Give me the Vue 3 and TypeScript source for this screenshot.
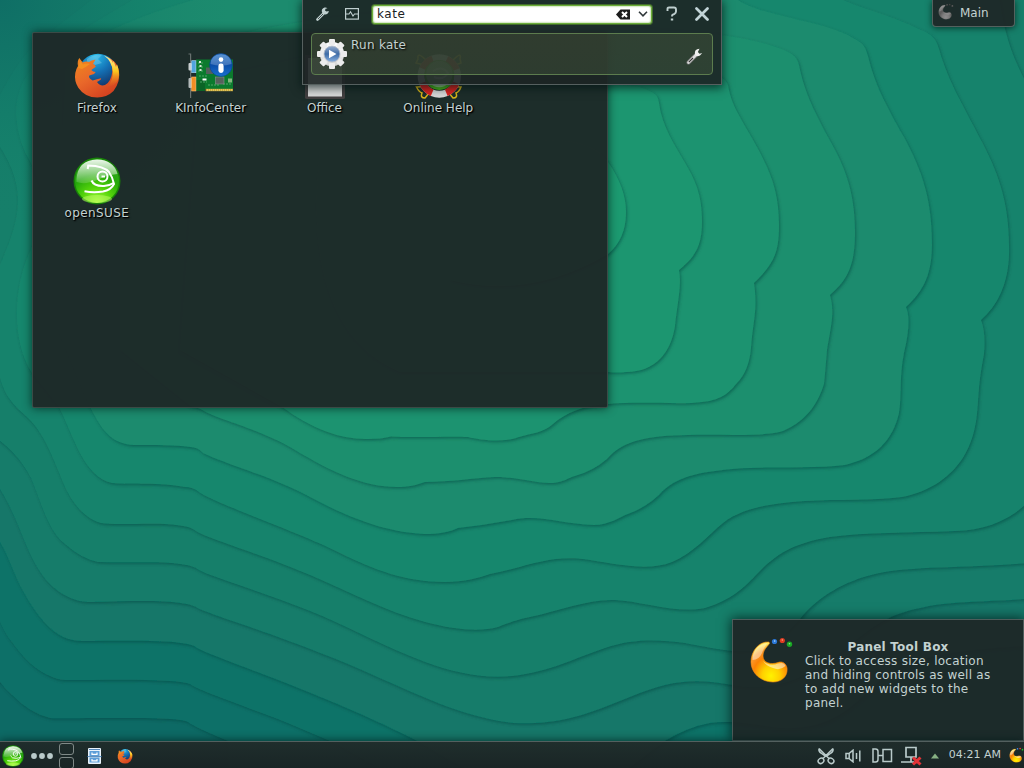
<script setup lang="ts">
interface Launcher {
  label: string
  icon: string
  wide?: boolean
}

const launchers: Launcher[] = [
  { label: 'Firefox', icon: 'i-firefox' },
  { label: 'KInfoCenter', icon: 'i-kinfo' },
  { label: 'Office', icon: 'i-office' },
  { label: 'Online Help', icon: 'i-help' },
  { label: 'openSUSE', icon: 'i-suse', wide: true },
]

// Terraces of the wallpaper, outermost first.
const terraces: { fill: string; d: string }[] = [
  { fill: '#0f6f67', d: 'M0 682 Q5 689 12 695 Q31 714 50 718 C54 719 130 717 170 719 Q184 720 188 722 Q194 727 228 741 L228 780 L1040 780 L1040 -10 L-10 -10 V682Z' },
  { fill: '#107368', d: 'M-5 610 Q5 635 12 642 Q30 668 50 676 Q58 680 66 680 C100 680 140 679 170 681 Q184 682 190 684 C197 690 240 704 290 724 L330 741 L420 790 L1040 790 L1040 -10 L-10 -10 V610Z' },
  { fill: '#127769', d: 'M-5 535 C8 552 12 572 24 593 C36 615 50 631 63 637 Q72 641 82 641 C120 641 160 640 180 643 Q189 644 194 646 C200 652 250 668 320 697 C350 709 390 727 417 741 L500 790 L600 790 L665 741 Q688 727 710 723 C730 720 750 724 780 728 C830 730 850 710 880 680 C910 655 960 650 1040 645 L1040 -10 L-10 -10 V535Z' },
  { fill: '#137b6a', d: 'M-5 482 C7 498 16 520 24 540 C38 575 52 592 76 600 Q82 602 92 602 C130 601 160 600 180 603 Q190 604 196 607 C202 612 260 629 320 653 C360 668 400 688 440 704 C480 719 510 725 535 723 C570 722 600 709 630 697 C670 680 695 678 732 685 C780 695 820 670 850 645 C880 620 895 613 925 607 C950 601 990 602 1040 598 L1040 -10 L-10 -10 V482Z' },
  { fill: '#157f6b', d: 'M-5 437 C12 449 24 464 31 478 C42 504 48 531 65 544 Q82 559 98 562 C130 563 160 561 180 564 Q190 565 196 568 C204 575 250 587 310 611 C345 625 385 647 425 662 C455 673 485 679 512 676 C550 672 575 658 605 648 C635 638 660 640 685 643 C710 648 723 650 732 651 C768 653 780 640 800 619 C817 597 845 581 875 574 C915 565 970 569 1040 562 L1040 -10 L-10 -10 V437Z' },
  { fill: '#17836c', d: 'M-5 350 C0 395 11 402 28 418 C45 434 54 461 65 487 C75 508 87 519 101 523 C120 526 160 521 183 526 Q191 527 196 531 C206 538 255 552 310 575 C350 592 385 611 425 622 C455 630 480 632 498 627 C508 623 516 620 530 617 C562 610 588 599 615 600 C641 601 675 614 705 608 C730 601 745 587 758 573 C775 555 793 543 830 537 C865 532 910 533 955 531 C985 530 1010 521 1030 500 L1030 90 C1015 62 1009 47 1003 20 L998 -10 L105 -10 Q45 35 30 50 T-5 105 V140 C12 162 18 184 18 200 C18 224 8 246 0 265 L-5 275Z' },
  { fill: '#18876d', d: 'M59 407 C76 442 84 476 112 483 C130 485 160 482 185 487 Q193 487 199 492 C212 502 300 533 340 553 C375 570 405 582 445 582 C465 582 478 578 490 574 Q500 572 512 569 C540 561 563 555 590 560 C620 565 650 571 672 562 C694 553 708 535 723 523 C743 507 775 503 805 501 C840 499 870 501 902 497 C930 492 952 476 964 456 C978 432 977 411 979 388 Q980 375 984 354 Q986 333 981 320 C997 306 1008 285 1009 255 C1010 210 1002 180 982 142 C962 103 948 81 939 49 C936 39 933 35 921 30 C889 14 860 9 832 -5 L150 -10 Q75 33 45 55 Q15 81 16 115 Q18 143 31 163 C48 198 45 220 31 249 C12 290 12 342 32 373 Z' },
  { fill: '#1a8b6e', d: 'M90 407 C103 433 113 444 134 445 C154 445 175 445 190 447 Q198 447 203 453 C220 462 275 478 310 497 C351 519 386 532 424 534 C440 534 449 532 458 528 Q485 525 512 520 C540 514 560 524 594 525 C609 525 620 517 628 514 Q645 508 659 495 C676 476 700 472 733 469 C770 466 815 469 845 465 C876 458 893 440 899 413 C902 396 899 379 904 353 Q912 320 906 307 C926 289 932 271 932 243 C932 201 923 172 904 137 C886 105 875 85 868 56 C865 43 860 42 848 35 C810 18 760 16 735 -2 L230 -10 Q80 28 65 70 L58 330Z' },
  { fill: '#1b8f6e', d: 'M190 406 Q198 407 204 411 C220 420 265 431 295 450 C330 471 363 487 397 487 C408 487 417 485 425 482 C450 482 473 478 495 477 C518 477 537 484 553 483 C564 482 568 478 575 476 Q593 471 607 459 C624 439 650 436 688 435 C720 434 765 437 783 431 C809 420 819 400 824 384 Q825 375 827 350 C831 325 835 313 830 295 C847 280 855 267 855 232 C855 190 844 165 828 137 C812 107 804 90 799 65 C797 55 790 52 776 47 Q752 39 722 35 L410 10 Q150 30 120 100 L120 350Z' },
  { fill: '#1c936f', d: 'M282 407 Q327 440 368 439 Q382 439 391 436.500 C415 438 450 436 468 437 C480 440 503 443 519 437 C532 433 543 433 553 424 C565 413 585 405 608 404 C643 401 682 405 702 402 C724 400 731 390 737 383 Q749 371 751 348 C753 320 758 310 754 283 C775 263 779 251 779 225 C779 190 770 170 752 138 C737 112 731 103 728 85 C725 76 715 75 690 65 L430 30 L200 80 L180 350Z' },
  { fill: '#1d966f', d: 'M320 150 L560 80 L640 87 C656 93 658 95 659 103 C662 127 675 145 688 168 C699 187 702 202 702 222 C702 246 695 257 679 270 C682 285 677 305 675 326 C671 352 656 372 626 372 Q617 373 608 372 L400 372 Q300 330 320 150Z' },
  { fill: '#1e9a70', d: 'M450 160 Q580 120 608 162 Q626 188 626 212 Q626 239 608 254 Q530 300 450 280Z' },
]
</script>

<template>
  <div class="desktop">
    <svg class="defs" width="0" height="0" aria-hidden="true">
      <defs>
        <linearGradient id="g-fox" x1="0" y1="0" x2=".7" y2="1">
          <stop offset="0" stop-color="#f08a1d" /><stop offset=".5" stop-color="#e9682a" /><stop offset="1" stop-color="#d2401f" />
        </linearGradient>
        <linearGradient id="g-tail" x1="0" y1="0" x2="0" y2="1">
          <stop offset="0" stop-color="#fff3a0" /><stop offset=".5" stop-color="#fbc81e" /><stop offset="1" stop-color="#ee7a1d" stop-opacity="0" />
        </linearGradient>
        <radialGradient id="g-globe" cx=".42" cy=".05" r=".85">
          <stop offset="0" stop-color="#28c0ee" /><stop offset=".5" stop-color="#1470b4" /><stop offset="1" stop-color="#122f62" />
        </radialGradient>
        <radialGradient id="g-suse" cx=".5" cy="1" r="1">
          <stop offset="0" stop-color="#a6ff3c" /><stop offset=".35" stop-color="#55d40b" /><stop offset=".65" stop-color="#25a80b" /><stop offset="1" stop-color="#39a82a" />
        </radialGradient>
        <linearGradient id="g-shine" x1="0" y1="0" x2="0" y2="1">
          <stop offset="0" stop-color="#fff" stop-opacity=".9" /><stop offset="1" stop-color="#fff" stop-opacity=".15" />
        </linearGradient>
        <linearGradient id="g-info" x1="0" y1="0" x2="0" y2="1">
          <stop offset="0" stop-color="#2c76c8" /><stop offset=".5" stop-color="#0b4ea8" /><stop offset="1" stop-color="#1a70cf" />
        </linearGradient>
        <linearGradient id="g-gear" x1="0" y1="0" x2="0" y2="1">
          <stop offset="0" stop-color="#fff" /><stop offset="1" stop-color="#d4d4d4" />
        </linearGradient>
        <linearGradient id="g-play" x1="0" y1="0" x2="0" y2="1">
          <stop offset="0" stop-color="#93abcb" /><stop offset=".5" stop-color="#3e6ba6" /><stop offset="1" stop-color="#86afe0" />
        </linearGradient>
        <radialGradient id="g-cashew" cx=".55" cy=".85" r=".8">
          <stop offset="0" stop-color="#fff200" /><stop offset=".3" stop-color="#ffd000" /><stop offset=".62" stop-color="#fb8206" /><stop offset=".82" stop-color="#fb9a2e" /><stop offset="1" stop-color="#ffe75a" />
        </radialGradient>
        <linearGradient id="g-cshine" x1="0" y1="0" x2="0" y2="1">
          <stop offset="0" stop-color="#fff" stop-opacity=".35" /><stop offset="1" stop-color="#fff" stop-opacity=".5" />
        </linearGradient>
      </defs>

      <symbol id="i-firefox" viewBox="0 0 48 48">
        <circle cx="25" cy="22.500" r="19.700" fill="url(#g-globe)" />
        <path fill="#9fd8ef" opacity=".35" d="M14 8 Q21 3 29 4 L25 8 L29 12 L22 14 L14 11Z" />
        <path fill="url(#g-fox)" d="M6.300 7 L9.700 11.500 Q13 10 16 11 Q18 9 22.500 8.500 L20 13 Q22 13 22.800 15.700 L18.300 19 Q20 21 22.700 21 L21 23 L16.300 24.500 Q15 27 19.700 29.500 Q24 28 28 27.300 Q29 28.500 24 31 Q27 35.500 32 34 Q38 31 39.300 20.700 Q40 12 34.300 6 Q44 10 45.800 19 Q48 30 40.500 40 Q34 46.500 24.300 46.500 Q12 46.500 5.300 36.700 Q1 30 2.300 22 Q3 18 5 15 Q4 10 6.300 7Z" />
        <path fill="url(#g-tail)" d="M31 4.500 Q38 7 40 12 L40.500 10 L43 16 L44 13.500 Q47 21 45.500 28 Q43 35 34 36 Q40 30 39.800 21 Q39 10 31 4.500Z" />
        <path fill="#f9a21f" opacity=".55" d="M5 17 L7 10 L10 13.500 Q14 12 17 13 Q13 16 9 18Z" />
      </symbol>

      <symbol id="i-suse" viewBox="0 0 48 48">
        <circle cx="24" cy="24" r="23.500" fill="#188408" />
        <circle cx="24" cy="24" r="22" fill="url(#g-suse)" />
        <path fill="url(#g-shine)" d="M3.500 22 Q5 3 24 2.500 Q41 3 44.500 17 Q34 18 24 23 Q12 28 3.500 25Z" />
        <ellipse cx="24" cy="42" rx="15" ry="4" fill="#c9ff70" opacity=".45" />
        <g fill="none" stroke="#fff" stroke-width="2">
          <path d="M14.700 12 L15.200 8.500 Q31 9 36 15 Q39.500 20 41 27 Q38 33 30 34.500 Q20 36 11.500 34.200" />
          <path d="M18.500 23.500 Q21 29.500 31 29 Q37 28.500 40.500 26" />
          <circle cx="29.500" cy="19.500" r="5" /><path d="M28.500 19.500 h3.500" />
        </g>
      </symbol>

      <symbol id="i-kinfo" viewBox="0 0 48 48">
        <rect x="9" y="8.500" width="37" height="29.500" fill="#0b7a2d" />
        <path d="M9 29 H18 V40 H9Z" fill="#0b6426" />
        <rect x="18.700" y="37.800" width="27.300" height="2.400" fill="#c9a83c" />
        <path d="M20 39h26" stroke="#eee084" stroke-dasharray="1 1" />
        <path d="M11 12h6M11 16h6M11 20h5M12 25h8M13 31h7M21 34h12M36 33h8" stroke="#51a866" stroke-dasharray="2 1" />
        <rect x="12" y="10" width="2" height="2" fill="#d5e5d5" /><rect x="12.500" y="14" width="2" height="2" fill="#d5e5d5" /><rect x="12.500" y="18" width="2" height="2" fill="#d5e5d5" />
        <rect x="19" y="16.500" width="7" height="6.500" fill="#52605a" /><rect x="28.500" y="26" width="8.500" height="7" fill="#56625d" stroke="#87938c" stroke-width=".6" />
        <path d="M15.500 28.500h4" stroke="#fff" stroke-width="2" /><rect x="41" y="27.500" width="4" height="4" fill="#82b67f" />
        <path d="M1.500 3 H3.600 V47" fill="none" stroke="#68716f" stroke-width="1.200" />
        <rect x="1.500" y="12" width="3.500" height="7.500" rx="1" fill="#c9cfd0" /><rect x="1.500" y="27" width="3.500" height="10" rx="1" fill="#b4baba" />
        <rect x="4.700" y="9.700" width="4.200" height="12" fill="#50a4dd" stroke="#b2dbf3" stroke-width=".6" />
        <rect x="4.700" y="26" width="4.200" height="14" fill="#f18d24" stroke="#ffc478" stroke-width=".6" />
        <circle cx="34" cy="14" r="11.400" fill="url(#g-info)" stroke="#073f8c" stroke-width=".5" />
        <path d="M23.500 13 Q24 3.500 34 3.200 Q44 3.500 44.500 13 Q34 16 23.500 13Z" fill="#fff" opacity=".22" />
        <circle cx="34" cy="8.600" r="2.300" fill="#fff" /><rect x="31.400" y="12.500" width="5.200" height="9.500" rx="2.400" fill="#fff" />
      </symbol>

      <symbol id="i-office" viewBox="0 0 48 48">
        <path d="M5 4 H45 V46.500 Q45 48 43 48 H7 Q5 48 5 46.500Z" fill="#423f40" />
        <path d="M8 7 H42 V45.500 H8Z" fill="#d9d9d9" />
      </symbol>

      <symbol id="i-help" viewBox="0 0 48 48">
        <g fill="none" stroke="#d9b51a" stroke-width="1.500">
          <path d="M12 9 Q3 0 4 8 L2 12 L6 13 L9 14M39 9 Q48 0 46 8 L47 12 L44 13 L40 14M10 35 Q7 36 2.500 36 Q5 41 8 42 Q6 47 11 47 L15 42M40 35 Q43 36 47 36 Q45 41 42 42 Q44 47 39 47 L35 42" />
        </g>
        <circle cx="25.300" cy="25" r="18.200" fill="none" stroke="#d8d8d8" stroke-width="7" />
        <circle cx="25.300" cy="25" r="18.200" fill="none" stroke="#dc2220" stroke-width="7" stroke-dasharray="14.200 14.388" stroke-dashoffset="-7.100" />
        <circle cx="25.300" cy="24" r="15" fill="#4cb91c" />
        <circle cx="25.300" cy="23" r="13.200" fill="#9ad28a" />
        <path d="M19 20 Q28 14 34 22 Q29 30 20 26" fill="none" stroke="#dff5d5" stroke-width="2" />
      </symbol>

      <symbol id="i-cashew" viewBox="0 0 48 48">
        <path fill="url(#g-cashew)" stroke="#f98d12" stroke-width=".6" d="M20 6 C10 5 2 15 2 26 C2 37 12 46 24 46 C33 46 39 40 38 32 C37 27 33 25 29 26.500 C22 29 14 27 14 20 C14 14 18 11 20.500 7.500 Z" />
        <path fill="url(#g-cshine)" d="M18.500 7 C9 8 3.500 15 3.500 24 Q10 24 13 17 Q15 11 18.500 7ZM14 25 Q21 31 29 27.500 Q35 25.500 36.500 30 Q31 35 24 32 Q17 30 14 25Z" />
        <circle cx="25.500" cy="5.500" r="2.600" fill="#2b78d8" /><circle cx="33.300" cy="4.500" r="2.600" fill="#dd3b20" /><circle cx="40.500" cy="8.300" r="2.700" fill="#19a825" />
        <circle cx="25.700" cy="5" r=".8" fill="#b1dcff" /><circle cx="33.300" cy="4" r=".8" fill="#ffa28e" /><circle cx="40.500" cy="7.700" r=".8" fill="#8df08d" />
      </symbol>
    </svg>

    <svg class="wallpaper" width="1024" height="768" viewBox="0 0 1024 768">
      <defs>
        <filter id="edge" filterUnits="userSpaceOnUse" x="0" y="0" width="1024" height="768">
          <feDropShadow dx="1.200" dy="1.600" stdDeviation="1.600" flood-color="#063f3c" flood-opacity=".5" />
        </filter>
        <radialGradient id="corner" gradientUnits="userSpaceOnUse" cx="0" cy="0" r="230">
          <stop offset="0" stop-color="#0d6a64" stop-opacity=".8" /><stop offset=".35" stop-color="#0f7066" stop-opacity=".5" /><stop offset="1" stop-color="#17806a" stop-opacity="0" />
        </radialGradient>
      </defs>
      <rect width="1024" height="768" fill="#0d6a65" />
      <path v-for="t in terraces" :key="t.fill" :d="t.d" :fill="t.fill" filter="url(#edge)" />
      <rect width="300" height="260" fill="url(#corner)" />
    </svg>

    <section class="folder">
      <div v-for="l in launchers" :key="l.label" class="launcher" :class="{ wide: l.wide }">
        <svg class="launcher-icon" width="48" height="48"><use :href="'#' + l.icon" /></svg>
        <span>{{ l.label }}</span>
      </div>
    </section>

    <section class="runner">
      <div class="runner-bar">
        <svg width="14" height="14" viewBox="0 0 14 14"><path d="M1.500 12.500 L8 6" stroke="#bfcfcf" stroke-width="2.600" stroke-linecap="round" /><path d="M11.500 1.200 A3.500 3.500 0 1 0 12.800 4 L10.500 4.600 L9 3.600 L9.500 1.800Z" fill="#bfcfcf" /><path d="M2 12 L7 7" stroke="#263634" stroke-width=".8" /></svg>
        <svg class="monitor" width="14" height="12" viewBox="0 0 14 12"><rect x=".6" y=".6" width="12.800" height="10.500" fill="none" stroke="#bfcfcf" stroke-width="1.200" /><path d="M1 6 H4 L5.500 3.800 L8 8 L9.500 6 H13" fill="none" stroke="#bfcfcf" stroke-width="1.100" /></svg>
        <div class="field">
          <span class="typed">kate</span>
          <svg width="14" height="11" viewBox="0 0 14 11"><path d="M0 5.500 L4.500 .5 H14 V10.500 H4.500Z" fill="#1c1c1c" /><path d="M6 3 L11 8M11 3 L6 8" stroke="#fff" stroke-width="2" /></svg>
          <svg class="chev" width="10" height="6" viewBox="0 0 10 6"><path d="M1 .8 L5 4.800 L9 .8" fill="none" stroke="#30383a" stroke-width="1.600" /></svg>
        </div>
        <svg class="query" width="12" height="16" viewBox="0 0 12 16"><path d="M1.500 5 V2.800 Q1.500 1.500 3 1.500 H8 Q10 1.500 10 3.500 V5.500 Q10 7 8.500 7.800 L6.500 8.800 Q6 9.200 6 10.500" fill="none" stroke="#bfcfcf" stroke-width="1.900" /><rect x="4.800" y="12.500" width="2.400" height="2" fill="#bfcfcf" /></svg>
        <svg class="close" width="14" height="14" viewBox="0 0 14 14"><path d="M1.500 1.500 L12.500 12.500M12.500 1.500 L1.500 12.500" stroke="#c2d4d7" stroke-width="2.700" stroke-linecap="round" /></svg>
      </div>
      <div class="match">
        <svg width="32" height="32" viewBox="-16 -16 32 32">
          <g fill="url(#g-gear)"><circle r="12.200" /><rect v-for="a in 8" :key="a" x="-3" y="-15" width="6" height="6" rx="1" fill="#ececec" :transform="`rotate(${a * 45})`" /></g>
          <circle r="8" fill="url(#g-play)" stroke="#b5bdc8" stroke-width=".8" /><path d="M-3 -4.200 L4.500 0 L-3 4.200Z" fill="#fff" />
        </svg>
        <span class="match-label">Run kate</span>
        <svg class="wrench" width="17" height="17" viewBox="0 0 17 17"><path d="M2.500 14.500 L10 7" stroke="#777" stroke-width="4" stroke-linecap="round" /><path d="M2.500 14.500 L10 7" stroke="#ddd" stroke-width="2.600" stroke-linecap="round" /><path d="M2.800 14.200 L7 10" stroke="#333" stroke-width="1.100" /><path d="M13.500 .8 Q8 1 9 6.500 Q10.500 9.500 14 7.500 L16.200 5 L13.500 5.800 L11.900 4 Z" fill="#f0f0f0" /></svg>
      </div>
    </section>

    <div class="activity">
      <svg class="ghost" width="17" height="17"><use href="#i-cashew" /></svg>
      <span>Main</span>
    </div>

    <aside class="tooltip">
      <svg width="48" height="48"><use href="#i-cashew" /></svg>
      <div class="tip-text">
        <b>Panel Tool Box</b>
        <p>Click to access size, location<br>and hiding controls as well as<br>to add new widgets to the<br>panel.</p>
      </div>
    </aside>

    <footer class="taskbar">
      <svg class="start" width="22" height="22"><use href="#i-suse" /></svg>
      <svg class="dots" width="22" height="6" viewBox="0 0 22 6" fill="#b9caca"><circle cx="3" cy="3" r="2.900" /><circle cx="11" cy="3" r="2.900" /><circle cx="19" cy="3" r="2.900" /></svg>
      <div class="pager"><i /><i /></div>
      <svg class="cabinet" width="15" height="16" viewBox="0 0 15 16"><rect x="1" y="0" width="13" height="16" rx="1" fill="#e9f3fb" /><rect x="2.500" y="3" width="10" height="5" fill="#5d9ed8" /><rect x="2.500" y="9.500" width="10" height="5" fill="#5d9ed8" /><path d="M2 1.500h11M0 8.600h15" stroke="#2e6aa6" stroke-width=".8" /><path d="M5 4.500 V6.300 H10 V4.500M5 11 V12.800 H10 V11" fill="none" stroke="#fff" stroke-width="1.200" /></svg>
      <svg class="fox" width="16" height="16"><use href="#i-firefox" /></svg>
      <div class="tray">
        <svg width="18" height="18" viewBox="0 0 18 18" fill="none" stroke="#b9caca" stroke-width="1.500"><path d="M2 1.500 L12 11.500M16 1.500 L6 11.500M2 1.500 Q1.500 4.500 4 6 L8 9M16 1.500 Q16.500 4.500 14 6 L10 9" /><ellipse cx="4" cy="13.800" rx="3" ry="2.500" transform="rotate(-35 4 13.800)" /><ellipse cx="14" cy="13.800" rx="3" ry="2.500" transform="rotate(35 14 13.800)" /></svg>
        <svg class="vol" width="17" height="14" viewBox="0 0 17 14" fill="none" stroke="#b9caca" stroke-width="1.500"><path d="M1 4.500 H4 L8 1.200 V12.800 L4 9.500 H1ZM4.200 4.500 V9.500M11.500 4 V10M14.800 1.500 V12.500" /></svg>
        <svg class="plug" width="21" height="15" viewBox="0 0 21 15" fill="none" stroke="#b9caca" stroke-width="1.500"><path d="M1 1 H3.500 Q6 1 6 3.500 V11.500 Q6 14 3.500 14 H1ZM6 7.500 H11M11 1.500 H19.500 V13.500 H11Z" /></svg>
        <svg class="net" width="21" height="20" viewBox="0 0 21 20" fill="none"><path d="M5 1.500 H15 V11 H5ZM10 11 V16M0 16 H13" stroke="#b9caca" stroke-width="1.700" /><path d="M12 11.500 L19.500 18.500M19.500 11.500 L12 18.500" stroke="#e33438" stroke-width="3" /></svg>
        <svg class="up" width="8" height="6" viewBox="0 0 8 6"><path d="M0 5.500 L4 .5 L8 5.500Z" fill="#87b083" /></svg>
        <time>04:21 AM</time>
        <svg class="tray-cashew" width="16" height="16"><use href="#i-cashew" /></svg>
      </div>
    </footer>
  </div>
</template>

<style>
body { overflow: hidden; background: #15806b; }
</style>

<style scoped>
.desktop { position: relative; width: 1024px; height: 768px; overflow: hidden; font: 12px/14px "DejaVu Sans", sans-serif; color: #c3d2d1; }
.desktop svg { display: block; flex: none; }
.defs { position: absolute; }
.wallpaper { position: absolute; inset: 0; }

.folder {
  position: absolute; left: 32px; top: 32px; width: 576px; height: 376px; box-sizing: border-box;
  padding: 18px 0 0 7px; display: grid; grid-template-columns: repeat(4, 113.800px); grid-auto-rows: 105px; align-content: start;
  background: rgba(30, 38, 38, .935); border: 1px solid rgba(66, 82, 78, .8); border-radius: 2px; box-shadow: 0 0 10px 0 rgba(0, 25, 22, .75);
}
.launcher { display: flex; flex-direction: column; align-items: center; gap: 2px; text-shadow: 1px 1px 2px #000, 1px 1px 1px #000; }
.wide span { letter-spacing: .4px; }
.wide .launcher-icon { position: relative; top: 1px; }

.runner {
  position: absolute; left: 302px; top: 0; width: 420px; height: 85px; box-sizing: border-box; padding: 0 8px;
  background: rgba(29, 36, 36, .91); border: 1px solid #56605f; border-top: 0; box-shadow: 0 2px 9px 1px rgba(0, 20, 18, .7);
}
.runner-bar { display: flex; align-items: center; height: 28px; padding-left: 5px; }
.monitor { margin-left: 15px; }
.field {
  display: flex; align-items: center; box-sizing: border-box; width: 280px; height: 19px; margin-left: 13px; padding: 0 3px 0 4px;
  background: #fff; border: 1px solid #6cae3a; border-radius: 3px; box-shadow: inset 0 0 2px #6aa83c, 0 0 0 1px rgba(92, 150, 45, .6); color: #1c2123;
}
.typed { flex: 1; letter-spacing: .6px; }
.chev { margin-left: 8px; }
.query { margin-left: 14px; }
.close { margin-left: 17px; }
.match {
  display: flex; box-sizing: border-box; height: 42px; margin-top: 5px; padding: 4px 9px 4px 4px;
  border: 1px solid #5c7c4e; border-radius: 4px; background: linear-gradient(rgba(72, 88, 60, .45), rgba(72, 94, 64, .4));
}
.match-label { flex: 1; margin-left: 3px; letter-spacing: .28px; text-shadow: 1px 1px 2px #000; }
.wrench { align-self: center; margin-top: 5px; }

.activity {
  position: absolute; left: 932px; top: 0; width: 83px; height: 27px; box-sizing: border-box; display: flex; align-items: center; padding: 0 0 1px 5px;
  background: rgba(30, 38, 38, .93); border: 1px solid #53615e; border-top: 0; border-radius: 0 0 4px 4px; box-shadow: 0 1px 6px rgba(0, 20, 18, .7);
}
.ghost { position: relative; top: -1px; filter: grayscale(1) brightness(.62); }
.activity span { margin-left: 5px; }

.tooltip {
  position: absolute; left: 732px; top: 619px; width: 292px; height: 122px; box-sizing: border-box; padding: 16px 0 0 16px; display: flex;
  background: rgba(30, 38, 38, .935); border: 1px solid #4e5d5b; box-shadow: 0 0 11px 1px rgba(0, 22, 20, .75);
}
.tip-text { margin: 4px 0 0 8px; width: 186px; letter-spacing: .26px; }
.tip-text b { display: block; text-align: center; letter-spacing: .22px; }
.tip-text p { margin: 0; white-space: nowrap; }

.taskbar {
  position: absolute; left: 0; bottom: 0; width: 1024px; height: 27px; box-sizing: border-box; display: flex; align-items: center; padding-left: 2px;
  background: linear-gradient(rgba(32, 42, 41, .95), rgba(26, 33, 34, .95)); border-top: 1px solid #53605f; box-shadow: 0 0 10px rgba(0, 25, 25, .8);
}
.start { margin-top: 1px; }
.dots { margin: 1px 0 0 7px; }
.pager { display: flex; flex-direction: column; gap: 2px; height: 26px; margin-left: 6px; padding-top: 1px; box-sizing: border-box; }
.pager i { flex: none; box-sizing: border-box; width: 15px; height: 12px; border: 1px solid #7f8987; border-radius: 3px; }
.cabinet { margin: 2px 0 0 13px; }
.fox { margin: 1px 0 0 15px; }
.tray { margin-left: auto; height: 26px; display: flex; align-items: center; padding-top: 1px; box-sizing: border-box; }
.vol { margin-left: 10px; }
.plug { margin-left: 10px; }
.net { margin-left: 8px; }
.up { margin-left: 9px; }
.tray time { margin: -2px 0 0 10px; font-size: 11px; }
.tray-cashew { margin: -1px -1px 0 8px; }
</style>
